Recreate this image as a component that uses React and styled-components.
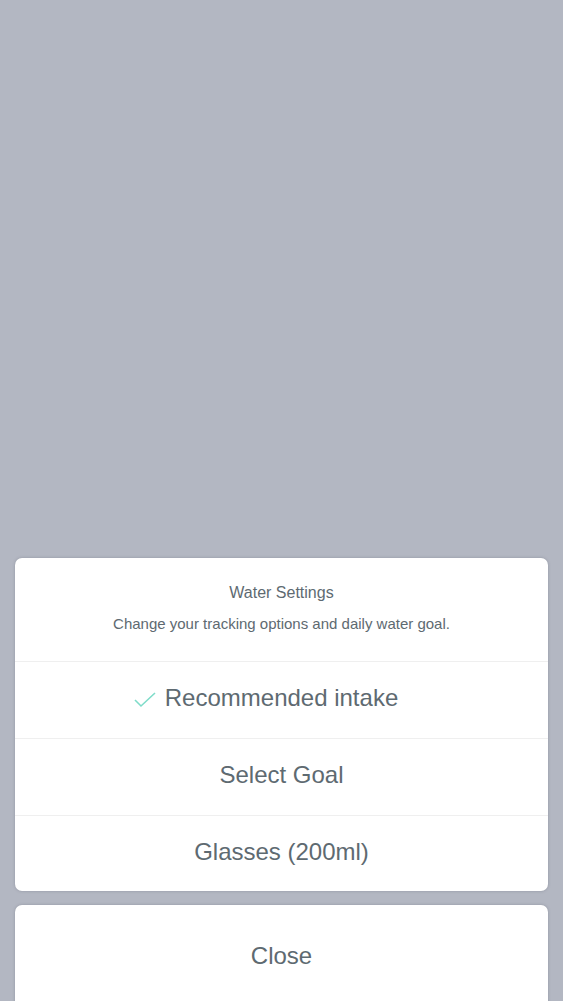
import React from "react";
import styled, { createGlobalStyle } from "styled-components";

const GlobalStyle = createGlobalStyle`
  html, body {
    margin: 0;
    padding: 0;
    background: #b3b7c2;
    font-family: "Liberation Sans", Arial, sans-serif;
  }
`;

const Screen = styled.div`
  height: 1001px;
  overflow: hidden;
  display: flex;
  flex-direction: column;
  justify-content: flex-end;
  background: #b3b7c2;
`;

const Card = styled.div`
  margin: 0 15px;
  background: #fff;
  border-radius: 7px;
  box-shadow: 0 0 3px rgba(80, 85, 100, 0.35);
  overflow: hidden;
  ${props => props.bottom && `
    margin-top: 14px;
    margin-bottom: -6px;
    border-bottom-left-radius: 0;
    border-bottom-right-radius: 0;
  `}
`;

const Header = styled.div`
  height: 103px;
  box-sizing: border-box;
  padding-top: 25px;
  text-align: center;
  color: #5e6a71;
`;

const Title = styled.div`
  font-size: 16px;
  line-height: 20px;
`;

const Subtitle = styled.div`
  margin-top: 12px;
  font-size: 15px;
  line-height: 18px;
`;

const Row = styled.div`
  height: 77px;
  border-top: 1px solid #efefef;
  display: flex;
  align-items: center;
  justify-content: center;
  font-size: 24px;
  color: #5e6a71;
  box-sizing: border-box;
  padding-bottom: 4px;
  ${props => props.last && `height: 76px;`}
`;

const Label = styled.span`
  position: relative;
`;

const CheckMark = styled.svg`
  position: absolute;
  right: 100%;
  top: 50%;
  width: 22px;
  height: 16px;
  margin-right: 9px;
  margin-top: -6px;
`;

const CloseButton = styled.div`
  height: 102px;
  display: flex;
  align-items: center;
  justify-content: center;
  font-size: 24px;
  color: #5e6a71;
  box-sizing: border-box;
`;

const Check = () => (
  <CheckMark viewBox="0 0 22 16">
    <polyline points="1,8 7,14 21,1" fill="none" stroke="#7fdcc9" strokeWidth="1.6" />
  </CheckMark>
);

export default function App() {
  return (
    <Screen>
      <GlobalStyle />
      <Card>
        <Header>
          <Title>Water Settings</Title>
          <Subtitle>Change your tracking options and daily water goal.</Subtitle>
        </Header>
        <Row><Label><Check />Recommended intake</Label></Row>
        <Row>Select Goal</Row>
        <Row last>Glasses (200ml)</Row>
      </Card>
      <Card bottom>
        <CloseButton>Close</CloseButton>
      </Card>
    </Screen>
  );
}
